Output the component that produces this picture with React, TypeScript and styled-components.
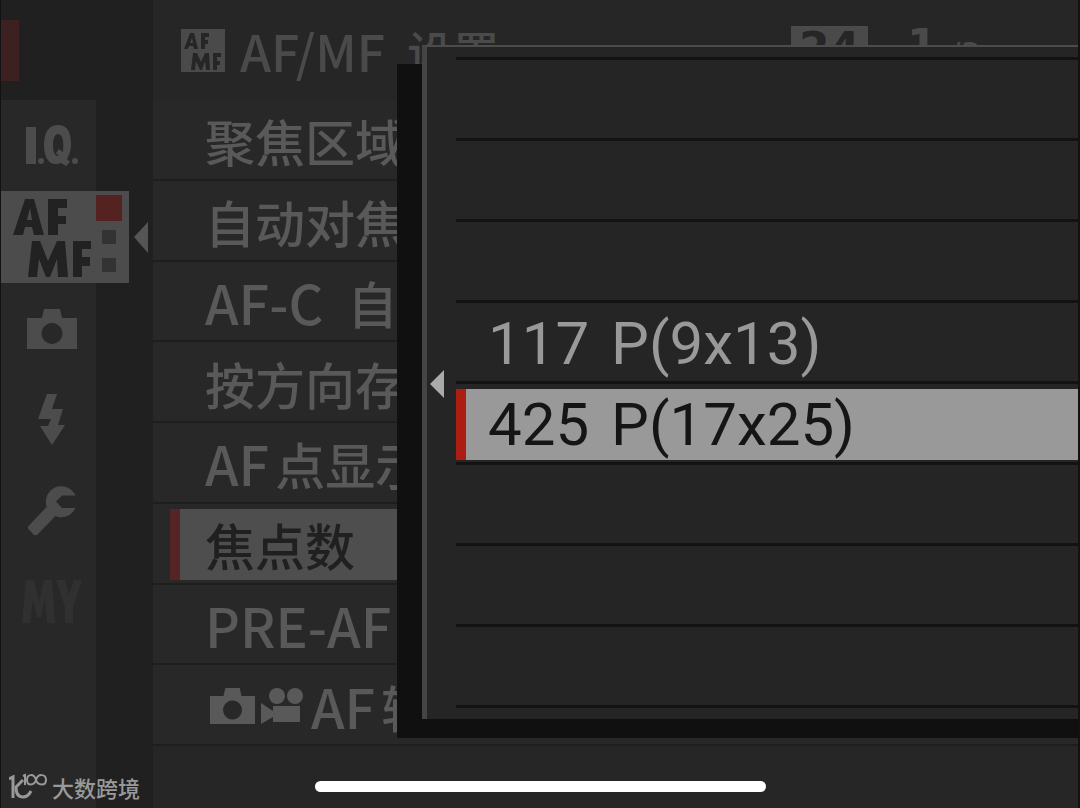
import React from "react";
import styled, { createGlobalStyle } from "styled-components";

const GlobalStyle = createGlobalStyle`
  * { box-sizing: border-box; }
  body { margin: 0; background: #121212; }
`;

const Screen = styled.main`
  position: relative;
  display: flex;
  min-height: 100vh;
  overflow: hidden;
  padding: 0 2px 0 1px;
  background: #121212;
  font-family: "Noto Sans CJK SC", sans-serif;
  color: #575757;
`;

const Sidebar = styled.nav`
  display: flex;
  flex-direction: column;
  flex: none;
  width: 152px;
  background: #202020;
`;

const Marker = styled.div`
  width: 18px;
  height: 61px;
  margin: 20px 0 19px;
  background: #3d2020;
`;

const Tabs = styled.div`
  display: flex;
  flex-direction: column;
  flex: 1;
  width: 95px;
  background: #282828;
`;

const Tab = styled.button<{ $dim?: boolean }>`
  display: flex;
  align-items: center;
  justify-content: center;
  width: 100%;
  height: 91px;
  padding: 0 0 0 6px;
  border: 0;
  background: none;
  color: ${(p) => (p.$dim ? "#303030" : "#4c4c4c")};
`;

const ActiveTab = styled(Tab)`
  position: relative;
  justify-content: flex-start;
  width: 128px;
  height: 92px;
  padding: 0;
  background: #4c4c4c;
`;

const Pages = styled.span`
  display: flex;
  flex-direction: column;
  align-items: center;
  gap: 14px;
  align-self: flex-start;
  padding: 4px 0 0 3px;
`;

const Page = styled.span<{ $current?: boolean }>`
  width: ${(p) => (p.$current ? 26 : 14)}px;
  height: ${(p) => (p.$current ? 26 : 14)}px;
  margin-bottom: ${(p) => (p.$current ? -5 : 0)}px;
  background: ${(p) => (p.$current ? "#552222" : "#333333")};
`;

const TabArrow = styled.svg`
  position: absolute;
  left: 133px;
  top: 31px;
`;

const Content = styled.section`
  position: relative;
  flex: 1;
  min-width: 0;
  background: #262626;
`;

const Header = styled.header`
  display: flex;
  align-items: center;
  height: 100px;
  padding-left: 28px;
  color: #4a4a4a;
`;

const Title = styled.h1`
  display: flex;
  align-items: center;
  gap: 22px;
  flex: none;
  width: 566px;
  margin: 0;
  padding-left: 15px;
  font-size: 46px;
  line-height: 60px;
  font-weight: 500;
`;

const Latin = styled.span<{ $size?: number }>`
  font-size: ${(p) => p.$size ?? 54}px;
`;

const Status = styled.div`
  display: flex;
  align-items: flex-start;
  align-self: flex-start;
  margin-top: 26px;
  font: 700 44px/46px "DejaVu Sans", sans-serif;
`;

const Badge = styled.span`
  width: 77px;
  background: #4a4a4a;
  color: #262626;
  text-align: center;
`;

const PageCount = styled.span`
  display: flex;
  gap: 12px;
  margin-left: 39px;
  line-height: 40px;
`;

const PageTotal = styled.small`
  padding-top: 8px;
  font-size: 32px;
  font-weight: 400;
`;

const Menu = styled.ul`
  display: grid;
  grid-auto-rows: 1fr;
  height: 646px;
  margin: 0;
  padding: 0;
  list-style: none;
`;

const MenuItem = styled.li`
  display: flex;
  align-items: center;
  padding: 2px 0 0 17px;
  border-bottom: 2px solid #1e1e1e;
  background: #282828;
`;

const MenuButton = styled.button<{ $selected?: boolean }>`
  display: flex;
  align-items: center;
  gap: ${(p) => (p.$selected ? 0 : 6)}px;
  width: 100%;
  height: 71px;
  padding: 0 0 0 25px;
  border: 0;
  border-left: 10px solid ${(p) => (p.$selected ? "#552525" : "transparent")};
  background: ${(p) => (p.$selected ? "#4e4e4e" : "none")};
  background-clip: padding-box;
  color: ${(p) => (p.$selected ? "#202020" : "#595959")};
  font-family: inherit;
  font-size: 50px;
  font-weight: 500;
  line-height: 70px;
  white-space: pre;
`;

const Modes = styled.span`
  display: flex;
  align-items: center;
  gap: 6px;
  padding: 0 2px 0 5px;
`;

const Popup = styled.aside`
  position: absolute;
  left: 269px;
  right: 0;
  top: 45px;
  height: 674px;
  padding: 10px 0 0 29px;
  border-left: 5px solid #444444;
  border-top: 2px solid #4c4c4c;
  background: #252525;
  box-shadow: -25px 19px 0 #101010, 0 19px 0 #101010;
`;

const PopupArrow = styled.svg`
  position: absolute;
  left: 3px;
  top: 323px;
`;

const Options = styled.ul`
  margin: 0;
  padding: 0;
  list-style: none;
  border-top: 3px solid #131313;
`;

const Option = styled.li`
  height: 81px;
  padding-top: 5px;
  border-bottom: 3px solid #131313;
`;

const OptionButton = styled.button<{ $selected?: boolean }>`
  display: flex;
  align-items: center;
  gap: 7px;
  width: 100%;
  height: 71px;
  padding: 0 0 0 22px;
  border: 0;
  border-left: 10px solid ${(p) => (p.$selected ? "#ad1e12" : "transparent")};
  background: ${(p) => (p.$selected ? "#999999" : "none")};
  background-clip: padding-box;
  color: ${(p) => (p.$selected ? "#151515" : "#999999")};
  font: 400 60px/70px Roboto, sans-serif;
  white-space: pre;
`;

const HomeBar = styled.div`
  position: absolute;
  left: 50%;
  bottom: 16px;
  width: 451px;
  height: 11px;
  margin-left: -225px;
  border-radius: 6px;
  background: #ffffff;
`;

const Watermark = styled.div`
  position: absolute;
  left: 9px;
  bottom: 6px;
  display: flex;
  align-items: center;
  gap: 5px;
  color: #999999;
  font-size: 22px;
  line-height: 30px;
  font-weight: 500;
`;

function Camera({ width }: { width: number }) {
  return (
    <svg width={width} height={width * 0.8} viewBox="0 0 50 40" fill="currentColor" aria-hidden>
      <path fillRule="evenodd" d="M0 9h15l2-9h16l2 9h15v31H0zM25 14a10.500 10.500 0 1 0 .01 0z" />
    </svg>
  );
}

function Movie() {
  return (
    <svg width="42" height="36" viewBox="0 0 42 36" fill="currentColor" aria-hidden>
      <circle cx="16" cy="8" r="8" />
      <circle cx="34" cy="8" r="8" />
      <path d="M12 18h27v16H12v-5L0 36V15l12 8z" />
    </svg>
  );
}

function Flash() {
  return (
    <svg width="28" height="51" viewBox="0 0 28 51" fill="currentColor" aria-hidden>
      <path d="M9 0h10l-5 15h11l-5 16h7L14 51 2 32h8l3-7H0z" />
    </svg>
  );
}

function Wrench() {
  return (
    <svg width="48" height="50" viewBox="0 0 48 50" fill="currentColor" aria-hidden>
      <path d="M47.500 9.500A15.500 15.500 0 1 0 47.500 22H34l-6-6.500 6-6z" />
      <path d="M19 20.500 0 40.500v2l6 6.500h3l19.500-20z" />
    </svg>
  );
}

function AfMf({ size }: { size: "tab" | "title" }) {
  return size === "tab" ? (
    <svg width="92" height="92" viewBox="0 0 92 92" fill="#222222" aria-label="AF MF">
      <path fillRule="evenodd" d="M12 44 24 8h9l10 36H33l-2-8h-7l-2 8zM26 29h5l-2-12zM47 8h19v9h-9v8h8v8h-8v11H47z" />
      <path d="M27 86l4-36h8l8 20 9-20h8l3 36H57l-1-18-7 18h-4l-7-18-2 18zM72 50h18v8h-9v8h8v9h-8v11h-9z" />
    </svg>
  ) : (
    <svg width="44" height="43" viewBox="0 0 44 43" aria-label="AF MF">
      <path fill="#4a4a4a" d="M0 0h44v43H0z" />
      <path
        fill="#262626"
        fillRule="evenodd"
        d="M3 20 9 4h4l4 16h-4l-1-3H8l-1 3zM9 14h3l-1-5zM20 4h8v4h-4v3h3v4h-3v5h-4zM10 41l2-17h4l4 9 4-9h4l1 17h-4l-1-9-3 9h-2l-4-9-1 9zM32 24h8v4h-4v4h3v4h-3v5h-4z"
      />
    </svg>
  );
}

function ImageQuality() {
  return (
    <svg width="53" height="42" viewBox="0 0 53 42" fill="currentColor" aria-label="I.Q.">
      <path
        fillRule="evenodd"
        d="M1 2h10v37H1zM33 0c9 0 13 7 13 19 0 7-2 11-4 15l3 3-4 4-5-3c-11 4-17-4-17-18C19 7 24 0 33 0zm0 9c-3 0-5 4-5 11s2 11 5 11h1l-3-3 3-4 4 3c1-9 0-18-5-18z"
      />
      <circle cx="16" cy="36" r="3" />
      <circle cx="50" cy="36" r="3" />
    </svg>
  );
}

function MyMenu() {
  return (
    <svg width="60" height="43" viewBox="0 0 60 43" fill="currentColor" aria-label="MY">
      <path d="M0 43 4 0h8l5 22L22 0h8l3 43h-8l-2-24-4 18h-4l-4-18-3 24zM34 0h9l4 15 5-15h8l-9 27v16h-8V27z" />
    </svg>
  );
}

const rows: { label: React.ReactNode; selected?: boolean }[] = [
  { label: "聚焦区域" },
  { label: "自动对焦" },
  { label: <><Latin>AF-C</Latin><Latin> </Latin>自</> },
  { label: "按方向存" },
  { label: <><Latin>AF</Latin>点显示</> },
  { label: "焦点数", selected: true },
  { label: <Latin>PRE-AF</Latin> },
  { label: <><Modes><Camera width={45} /><Movie /></Modes><Latin>AF</Latin>转</> },
];

const options: ({ points: string; grid: string } | null)[] = [
  null,
  null,
  null,
  { points: "117", grid: "P(9x13)" },
  { points: "425", grid: "P(17x25)" },
  null,
  null,
  null,
];

export default function App() {
  return (
    <>
      <GlobalStyle />
      <Screen>
        <Sidebar>
          <Marker />
          <Tabs>
            <Tab><ImageQuality /></Tab>
            <ActiveTab>
              <AfMf size="tab" />
              <Pages><Page $current /><Page /><Page /></Pages>
              <TabArrow width="14" height="31" viewBox="0 0 14 31"><path d="M14 0v31L0 15z" fill="#555555" /></TabArrow>
            </ActiveTab>
            <Tab aria-label="Shooting"><Camera width={50} /></Tab>
            <Tab aria-label="Flash"><Flash /></Tab>
            <Tab aria-label="Setup"><Wrench /></Tab>
            <Tab $dim><MyMenu /></Tab>
          </Tabs>
        </Sidebar>
        <Content>
          <Header>
            <AfMf size="title" />
            <Title><Latin $size={50}>AF/MF</Latin>设置</Title>
            <Status>
              <Badge>24</Badge>
              <PageCount>1<PageTotal>/3</PageTotal></PageCount>
            </Status>
          </Header>
          <Menu>
            {rows.map((row, i) => (
              <MenuItem key={i}>
                <MenuButton $selected={row.selected}>{row.label}</MenuButton>
              </MenuItem>
            ))}
          </Menu>
          <Popup>
            <PopupArrow width="14" height="28" viewBox="0 0 14 28"><path d="M14 0v28L0 14z" fill="#aaaaaa" /></PopupArrow>
            <Options>
              {options.map((option, i) => (
                <Option key={i}>
                  {option && (
                    <OptionButton $selected={i === 4}>
                      <span>{option.points} </span>
                      <span>{option.grid}</span>
                    </OptionButton>
                  )}
                </Option>
              ))}
            </Options>
          </Popup>
        </Content>
        <HomeBar />
        <Watermark>
          <svg width="38" height="28" viewBox="0 0 38 28" fill="none" stroke="currentColor" strokeWidth="3" aria-hidden>
            <path d="M0 6l4-2v21" />
            <path d="M14 7 7 14c0 6 2 10 7 10 4 0 6-2 8-6" />
            <path strokeWidth="2" d="M14 3l2-1v10M27 7c-2-7-9-6-9 0s7 6 9 0c2-7 10-6 10 0s-8 6-10 0" />
          </svg>
          大数跨境
        </Watermark>
      </Screen>
    </>
  );
}
